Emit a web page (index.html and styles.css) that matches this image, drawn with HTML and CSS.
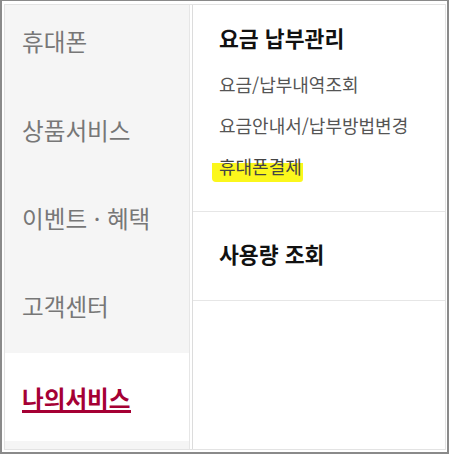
FILE: index.html
```html
<!DOCTYPE html>
<html lang="ko">
<head>
<meta charset="utf-8">
<title>나의서비스 메뉴</title>
<link rel="stylesheet" href="styles.css">
</head>
<body>
<div class="frame">
  <div class="box">
    <ul class="nav">
      <li class="nav-item"><span>휴대폰</span></li>
      <li class="nav-item"><span>상품서비스</span></li>
      <li class="nav-item"><span>이벤트 · 혜택</span></li>
      <li class="nav-item"><span>고객센터</span></li>
      <li class="nav-item active"><span>나의서비스</span></li>
    </ul>
    <div class="panel">
      <section class="group first">
        <h3 class="group-title">요금 납부관리</h3>
        <ul class="sub">
          <li class="sub-item"><span>요금/납부내역조회</span></li>
          <li class="sub-item"><span>요금안내서/납부방법변경</span></li>
          <li class="sub-item marked"><span>휴대폰결제</span></li>
        </ul>
      </section>
      <section class="group second">
        <h3 class="group-title">사용량 조회</h3>
      </section>
    </div>
  </div>
</div>
</body>
</html>
```

FILE: styles.css
```css
* { box-sizing: border-box; }
html, body {
  margin: 0;
  padding: 0;
  background: #fff;
}
body {
  font-family: "Noto Sans CJK KR", "Noto Sans", sans-serif;
}
.frame {
  width: 449px;
  height: 454px;
  border-style: solid;
  border-color: #8a8a8a;
  border-width: 1px 2px 2px 2px;
  padding: 3px 1px 2px 2px;
  background: #fff;
}
.box {
  height: 100%;
  border: 1px solid #e3e3e3;
  display: flex;
}
.nav {
  list-style: none;
  margin: 0 2px 0 0;
  padding: 0;
  width: 185px;
  background: #f5f5f5;
  border-right: 1px solid #e6e6e6;
}
.nav-item {
  height: 88px;
  padding: 26px 0 0 17px;
  font-size: 23.6px;
  line-height: 30px;
  color: #777;
}
.nav-item:first-child {
  height: 84px;
  padding-top: 21px;
}
.nav-item.active {
  background: #fff;
  color: #a50034;
  font-weight: 700;
  padding-top: 30px;
}
.nav-item.active span {
  display: inline-block;
  line-height: 24px;
  border-bottom: 3px solid #a50034;
  padding-bottom: 0;
}
.panel {
  flex: 1;
  border-left: 1px solid #dcdcdc;
}
.group {
  padding-left: 26px;
  border-bottom: 1px solid #e6e6e6;
}
.group.first {
  height: 207px;
  padding-top: 19px;
}
.group.second {
  height: 89px;
  padding-top: 28px;
}
.group-title {
  margin: 0;
  font-size: 21.6px;
  line-height: 28px;
  font-weight: 700;
  color: #111;
}
.sub {
  list-style: none;
  margin: 11px 0 0;
  padding: 0;
}
.sub-item {
  height: 41px;
  display: flex;
  align-items: center;
  font-size: 18px;
  color: #555;
}
.sub-item span {
  line-height: 24px;
}
.sub-item.marked span {
  padding: 4px 1px 4px 7px;
  margin-left: -7px;
  color: #444;
  background: linear-gradient(to bottom, transparent 13px, #fbf71c 13px);
  border-radius: 2px 0 3px 4px;
}
```
